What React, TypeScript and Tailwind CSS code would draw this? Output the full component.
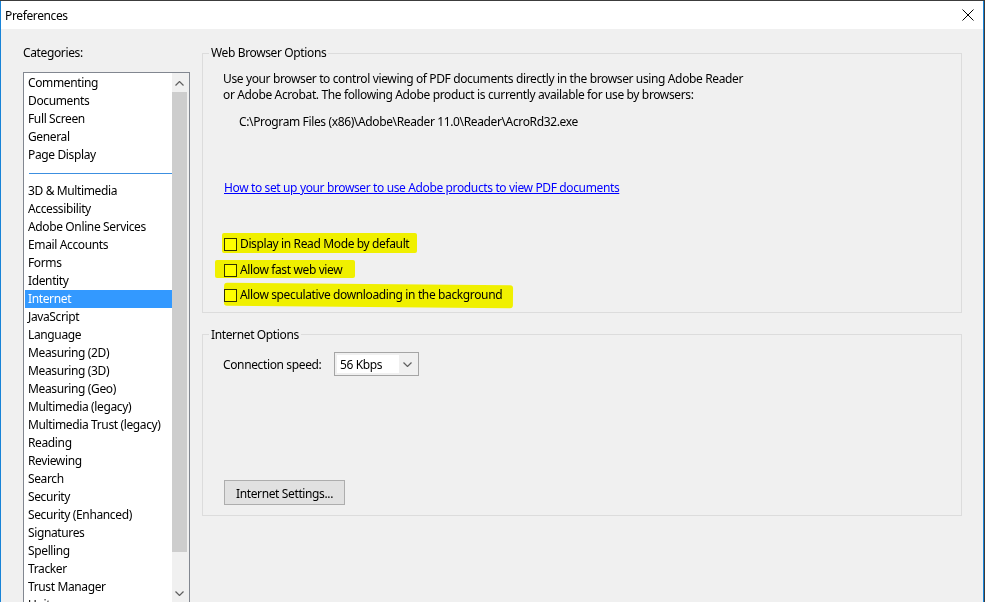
import React from 'react';

const topItems = ['Commenting', 'Documents', 'Full Screen', 'General', 'Page Display'];
const moreItems = [
  '3D & Multimedia',
  'Accessibility',
  'Adobe Online Services',
  'Email Accounts',
  'Forms',
  'Identity',
  'Internet',
  'JavaScript',
  'Language',
  'Measuring (2D)',
  'Measuring (3D)',
  'Measuring (Geo)',
  'Multimedia (legacy)',
  'Multimedia Trust (legacy)',
  'Reading',
  'Reviewing',
  'Search',
  'Security',
  'Security (Enhanced)',
  'Signatures',
  'Spelling',
  'Tracker',
  'Trust Manager',
  'Units',
];

function Chevron({ up }: { up?: boolean }) {
  return (
    <svg width="9" height="5" viewBox="0 0 9 5" fill="none">
      <polyline
        points={up ? '0.5,4.5 4.5,0.5 8.5,4.5' : '0.5,0.5 4.5,4.5 8.5,0.5'}
        stroke="#606060"
        strokeWidth="1.2"
      />
    </svg>
  );
}

function Item({ label, selected }: { label: string; selected?: boolean }) {
  return (
    <div
      className={
        selected
          ? 'h-[18px] leading-[18px] pl-[3px] bg-[#3399ff] text-white whitespace-nowrap'
          : 'h-[18px] leading-[18px] pl-[3px] whitespace-nowrap'
      }
    >
      {label}
    </div>
  );
}

function CheckRow({ label, hl }: { label: string; hl: string }) {
  return (
    <div className="relative flex items-center h-[16px]">
      <div className="w-[13px] h-[13px] border border-[#333333] bg-white" />
      <span className="ml-[3px]">{label}</span>
      {/* highlighter stroke on top of the row */}
      <div className={hl} />
    </div>
  );
}

export default function App() {
  return (
    <div className="w-[985px] h-[602px] overflow-hidden bg-[#3c3c3c] pt-px pr-px font-['Segoe_UI','Noto_Sans',sans-serif] text-[12px] leading-[16px] tracking-[-0.37px] text-black">
      <div className="h-full border-x border-[#1883d7] bg-[#f0f0f0] flex flex-col">
        {/* title bar */}
        <div className="h-[28px] shrink-0 bg-white flex items-center justify-between pl-[4px] pr-[9px]">
          <span className="relative top-px">Preferences</span>
          <svg width="12" height="12" viewBox="0 0 12 12">
            <path d="M0.5 0.5 L11.5 11.5 M11.5 0.5 L0.5 11.5" stroke="#000" strokeWidth="1" />
          </svg>
        </div>

        <div className="flex flex-1 min-h-0">
          {/* categories */}
          <div className="pl-[22px] pt-[16px] shrink-0">
            <div>Categories:</div>
            <div className="mt-[11px] w-[167px] h-[532px] border border-[#828790] bg-white flex overflow-hidden">
              <div className="w-[148px] pt-px pl-px">
                {topItems.map((t) => (
                  <Item key={t} label={t} />
                ))}
                <div className="h-[18px] pt-[9px] pl-[4px]">
                  <div className="h-px bg-[#3c8fe0]" />
                </div>
                {moreItems.map((t) => (
                  <Item key={t} label={t} selected={t === 'Internet'} />
                ))}
              </div>
              <div className="w-[17px] bg-[#f0f0f0] flex flex-col">
                <div className="h-[17px] pt-[3px] flex items-center justify-center pr-[2px]">
                  <Chevron up />
                </div>
                <div className="mt-[2px] w-[15px] h-[460px] bg-[#cdcdcd]" />
                <div className="mt-auto mb-px h-[17px] flex items-center justify-center pr-[2px]">
                  <Chevron />
                </div>
              </div>
            </div>
          </div>

          {/* options */}
          <div className="flex-1 pl-[12px] pt-[16px] pr-[21px]">
            <fieldset className="border border-[#dcdcdc]">
              <legend className="ml-[6px] px-[2px] leading-[16px]">Web Browser Options</legend>
              <div className="pl-[20px] pt-[10px] pb-[9px]">
                <p>
                  Use your browser to control viewing of PDF documents directly in the browser using Adobe Reader
                  <br />
                  or Adobe Acrobat. The following Adobe product is currently available for use by browsers:
                </p>
                <p className="mt-[11px] pl-[16px]">{'C:\\Program Files (x86)\\Adobe\\Reader 11.0\\Reader\\AcroRd32.exe'}</p>
                <a href="#" className="block mt-[50px] ml-px w-fit text-[#0000ff] underline">
                  How to set up your browser to use Adobe products to view PDF documents
                </a>
                <div className="mt-[40px] ml-px">
                  <CheckRow
                    label="Display in Read Mode by default"
                    hl="absolute left-[-2px] top-[-3px] w-[195px] h-[20px] bg-[#ffff00] mix-blend-multiply rounded-[2px]"
                  />
                  <div className="mt-[10px]">
                    <CheckRow
                      label="Allow fast web view"
                      hl="absolute left-[-9px] top-[-2px] w-[140px] h-[18px] bg-[#ffff00] mix-blend-multiply rounded-[2px]"
                    />
                  </div>
                  <div className="mt-[9px]">
                    <CheckRow
                      label="Allow speculative downloading in the background"
                      hl="absolute left-0 top-[-3px] w-[289px] h-[23px] bg-[#ffff00] mix-blend-multiply rounded-[3px] rotate-[0.5deg]"
                    />
                  </div>
                </div>
              </div>
            </fieldset>

            <fieldset className="mt-[13px] border border-[#dcdcdc]">
              <legend className="ml-[6px] px-[2px] leading-[16px]">
                <span className="relative top-px">Internet Options</span>
              </legend>
              <div className="pl-[20px] pt-[10px] pb-[10px]">
                <div className="flex items-center">
                  <span className="w-[111px] relative top-px">Connection speed:</span>
                  <div className="w-[85px] h-[24px] border border-[#a5a5a5] bg-[#f0f0f0] p-[2px] flex">
                    <div className="w-[62px] bg-white pl-[3px] leading-[19px]">56 Kbps</div>
                    <div className="flex-1 flex items-center justify-center">
                      <Chevron />
                    </div>
                  </div>
                </div>
                <button className="mt-[104px] ml-px w-[121px] h-[25px] border border-[#adadad] bg-[#e1e1e1] text-center">
                  <span className="relative top-px">Internet Settings...</span>
                </button>
              </div>
            </fieldset>
          </div>
        </div>
      </div>
    </div>
  );
}
